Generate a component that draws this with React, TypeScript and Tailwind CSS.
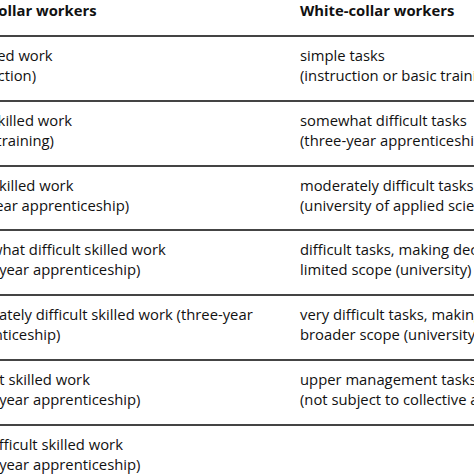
type Row = {
    blue: string[]
    white: string[]
}

const ROWS: Row[] = [
    {blue: ["unskilled work", "(instruction)"], white: ["simple tasks", "(instruction or basic training)"]},
    {blue: ["semi-skilled work", "(basic training)"], white: ["somewhat difficult tasks", "(three-year apprenticeship)"]},
    {blue: ["basic skilled work", "(two-year apprenticeship)"], white: ["moderately difficult tasks", "(university of applied sciences)"]},
    {
        blue: ["somewhat difficult skilled work", "(three-year apprenticeship)"],
        white: ["difficult tasks, making decisions within", "limited scope (university)"],
    },
    {
        blue: ["moderately difficult skilled work (three-year", "apprenticeship)"],
        white: ["very difficult tasks, making decisions within", "broader scope (university)"],
    },
    {blue: ["difficult skilled work", "(three-year apprenticeship)"], white: ["upper management tasks", "(not subject to collective agreement)"]},
    {blue: ["very difficult skilled work", "(three-year apprenticeship)"], white: []},
]

function Cell({lines}: {lines: string[]}) {
    return (
        <div className="whitespace-nowrap">
            {lines.map(line => (
                <div key={line}>{line}</div>
            ))}
        </div>
    )
}

export default function App() {
    return (
        <div className="h-[474px] w-[474px] overflow-hidden bg-white font-['Open_Sans',sans-serif] text-[14.8px] leading-[20px] text-[#111]">
            <div className="ml-[-47px] w-[640px]">
                <div className="grid grid-cols-[347px_1fr] pb-[15px] font-bold">
                    <div>Blue-collar workers</div>
                    <div>White-collar workers</div>
                </div>

                {ROWS.map((row, index) => (
                    <div
                        key={index}
                        className="grid grid-cols-[347px_1fr] border-t-2 border-[#444] pb-[14.8px] pt-[8px]"
                    >
                        <Cell lines={row.blue}/>
                        <Cell lines={row.white}/>
                    </div>
                ))}
            </div>
        </div>
    )
}
